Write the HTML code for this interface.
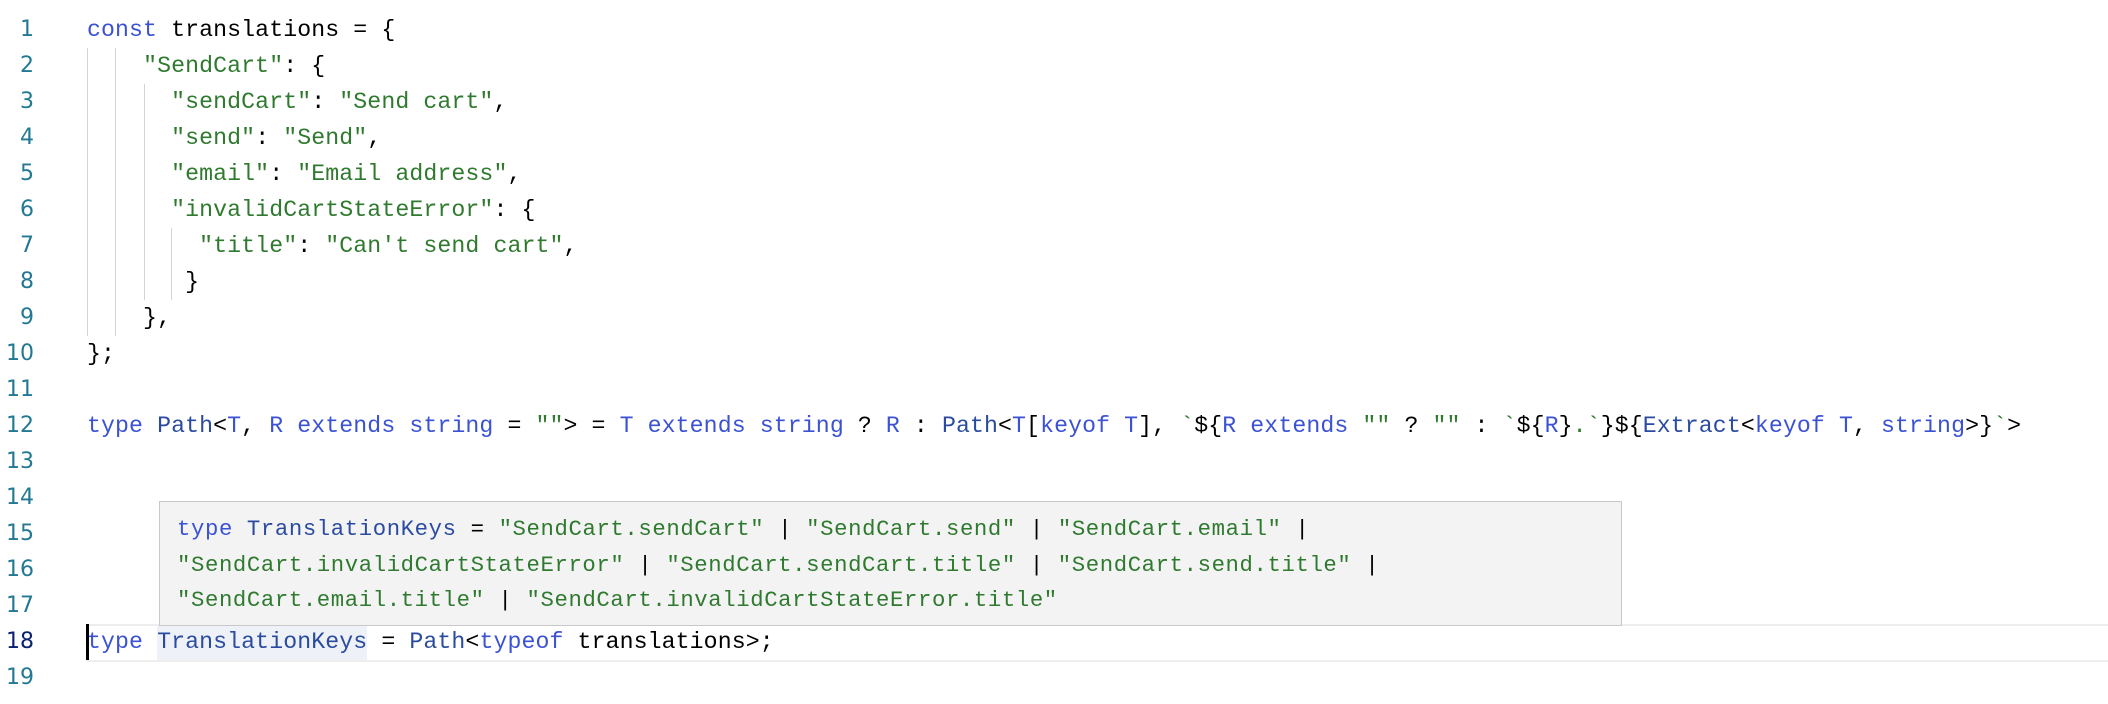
<!DOCTYPE html>
<html><head><meta charset="utf-8"><style>
html,body{margin:0;padding:0;background:#fff;width:2108px;height:704px;overflow:hidden;position:relative}
.ln{position:absolute;left:0;width:34px;text-align:right;font:22px/36px "DejaVu Sans","Liberation Sans",sans-serif;color:#237893}
.c{position:absolute;left:87px;white-space:pre;font:23.2px/36px "Liberation Mono",monospace;letter-spacing:0.1px;color:#000}
.k{color:#3b52d4}.t{color:#2a4b9f}.s{color:#2f7a2f}
.g{position:absolute;width:1px;background:#d3d3d3}
#tip{position:absolute;left:159px;top:501px;width:1463px;height:125px;background:#f3f3f4;border:1px solid #c8c8c8;box-sizing:border-box}
#tip .c{left:17px;font-size:22.3px;letter-spacing:0.6px}
</style></head><body>
<div class="g" style="left:87px;top:48px;height:288px"></div>
<div class="g" style="left:115px;top:48px;height:288px"></div>
<div class="g" style="left:144px;top:84px;height:216px"></div>
<div class="g" style="left:171px;top:228px;height:72px"></div>

<div style="position:absolute;left:87px;right:0;top:624px;height:34px;border-top:2px solid #eeeeee;border-bottom:2px solid #eeeeee;box-sizing:content-box"></div>
<div style="position:absolute;left:157px;top:626px;width:210px;height:34px;background:#eef2f8"></div>
<div style="position:absolute;left:86px;top:624px;width:3px;height:36px;background:#000"></div>

<div class="ln" style="top:12px">1</div><div class="c" style="top:12px"><span class="k">const</span> translations = {</div>
<div class="ln" style="top:48px">2</div><div class="c" style="top:48px">    <span class="s">"SendCart"</span>: {</div>
<div class="ln" style="top:84px">3</div><div class="c" style="top:84px">      <span class="s">"sendCart"</span>: <span class="s">"Send cart"</span>,</div>
<div class="ln" style="top:120px">4</div><div class="c" style="top:120px">      <span class="s">"send"</span>: <span class="s">"Send"</span>,</div>
<div class="ln" style="top:156px">5</div><div class="c" style="top:156px">      <span class="s">"email"</span>: <span class="s">"Email address"</span>,</div>
<div class="ln" style="top:192px">6</div><div class="c" style="top:192px">      <span class="s">"invalidCartStateError"</span>: {</div>
<div class="ln" style="top:228px">7</div><div class="c" style="top:228px">        <span class="s">"title"</span>: <span class="s">"Can't send cart"</span>,</div>
<div class="ln" style="top:264px">8</div><div class="c" style="top:264px">       }</div>
<div class="ln" style="top:300px">9</div><div class="c" style="top:300px">    },</div>
<div class="ln" style="top:336px">10</div><div class="c" style="top:336px">};</div>
<div class="ln" style="top:372px">11</div>
<div class="ln" style="top:408px">12</div><div class="c" style="top:408px"><span class="k">type</span> <span class="t">Path</span>&lt;<span class="k">T</span>, <span class="k">R</span> <span class="k">extends</span> <span class="k">string</span> = <span class="s">""</span>&gt; = <span class="k">T</span> <span class="k">extends</span> <span class="k">string</span> ? <span class="k">R</span> : <span class="t">Path</span>&lt;<span class="k">T</span>[<span class="k">keyof</span> <span class="k">T</span>], <span class="s">`</span>${<span class="k">R</span> <span class="k">extends</span> <span class="s">""</span> ? <span class="s">""</span> : <span class="s">`</span>${<span class="k">R</span>}<span class="s">.`</span>}${<span class="t">Extract</span>&lt;<span class="k">keyof</span> <span class="k">T</span>, <span class="k">string</span>&gt;}<span class="s">`</span>&gt;</div>
<div class="ln" style="top:444px">13</div>
<div class="ln" style="top:480px">14</div>
<div class="ln" style="top:516px">15</div>
<div class="ln" style="top:552px">16</div>
<div class="ln" style="top:588px">17</div>
<div class="ln" style="top:624px;color:#0b216f">18</div><div class="c" style="top:624px"><span class="k">type</span> <span class="t">TranslationKeys</span> = <span class="t">Path</span>&lt;<span class="k">typeof</span> translations&gt;;</div>
<div class="ln" style="top:660px">19</div>

<div id="tip">
<div class="c" style="top:9px"><span class="k">type</span> <span class="t">TranslationKeys</span> = <span class="s">"SendCart.sendCart"</span> | <span class="s">"SendCart.send"</span> | <span class="s">"SendCart.email"</span> |</div>
<div class="c" style="top:45px"><span class="s">"SendCart.invalidCartStateError"</span> | <span class="s">"SendCart.sendCart.title"</span> | <span class="s">"SendCart.send.title"</span> |</div>
<div class="c" style="top:80px"><span class="s">"SendCart.email.title"</span> | <span class="s">"SendCart.invalidCartStateError.title"</span></div>
</div>
</body></html>
